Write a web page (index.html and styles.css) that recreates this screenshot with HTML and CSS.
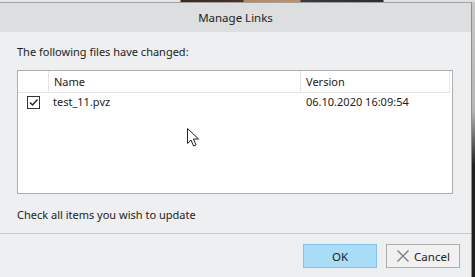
FILE: index.html
```html
<!DOCTYPE html>
<html>
<head>
<meta charset="utf-8">
<link rel="stylesheet" href="styles.css">
</head>
<body>
<div class="desktop">
  <div class="topstrip"></div>
  <div class="dialog">
    <div class="titlebar">Manage Links</div>
    <div class="content">
      <div class="label">The following files have changed:</div>
      <div class="listbox">
        <div class="header">
          <div class="col-check"></div>
          <div class="col-name">Name</div>
          <div class="col-version">Version</div>
        </div>
        <div class="row">
          <div class="col-check cell"><span class="checkbox"><svg width="11" height="11" viewBox="0 0 11 11"><path d="M2 5.5 L4.5 8 L9.5 2.5" fill="none" stroke="#222" stroke-width="1.4"/></svg></span></div>
          <div class="col-name cell">test_11.pvz</div>
          <div class="col-version cell">06.10.2020 16:09:54</div>
        </div>
        <svg class="cursor" width="16" height="22" viewBox="0 0 16 22"><path d="M1.5 1.5 L1.5 16.5 L5 13 L7.5 19 L10 18 L7.5 12 L12.5 12 Z" fill="#fff" stroke="#222" stroke-width="1"/></svg>
      </div>
      <div class="hint">Check all items you wish to update</div>
    </div>
    <div class="footer">
      <button class="btn ok">OK</button>
      <button class="btn cancel"><svg width="14" height="14" viewBox="0 0 14 14"><path d="M1.5 1.5 L12.5 12.5 M12.5 1.5 L1.5 12.5" stroke="#8a8a8a" stroke-width="1.6"/></svg><span>Cancel</span></button>
    </div>
  </div>
</div>
</body>
</html>
```
FILE: styles.css
```css
html, body {
  margin: 0;
  padding: 0;
}
body {
  width: 475px;
  height: 277px;
  overflow: hidden;
  background: #2a2a2a;
  font-family: "Noto Sans", "Open Sans", sans-serif;
  font-size: 11px;
  color: #222;
}
.desktop {
  width: 475px;
  height: 277px;
  background: linear-gradient(to bottom, #c9c9c9 0, #b5b5b5 40%, #1e1e1e 60%, #1e1e1e 100%);
}
.topstrip {
  height: 2px;
  width: 475px;
  background: linear-gradient(to right, #e6e6e6 0, #e6e6e6 180px, #3b2a1e 181px, #4a3322 243px, #b88a5e 244px, #c28f62 300px, #3a3a3a 301px, #2b2b2b 383px, #e0e0e0 384px, #e0e0e0 475px);
}
.dialog {
  width: 472px;
  height: 275px;
  box-sizing: border-box;
  border-right: 1px solid #8f8f8f;
  border-top: 1px solid #a0a0a0;
  background: #eeeff0;
  display: flex;
  flex-direction: column;
}
.titlebar {
  height: 29px;
  background: #dcdedf;
  display: flex;
  align-items: center;
  justify-content: center;
  font-size: 11.5px;
  color: #222;
}
.content {
  padding: 11px 18px 0 17px;
  height: 202px;
  box-sizing: border-box;
  border-bottom: 1px solid #c9c9c9;
}
.label {
  line-height: 17px;
  height: 17px;
}
.listbox {
  position: relative;
  margin-top: 10px;
  height: 124px;
  box-sizing: border-box;
  border: 1px solid #adadad;
  background: #fff;
}
.header {
  display: flex;
  height: 22px;
  border-bottom: 1px solid #e5e5e5;
  box-sizing: border-box;
  margin-right: 2px;
}
.header > div {
  line-height: 20px;
  padding-top: 1px;
}
.header .col-name, .header .col-version {
  border-left: 1px solid #e5e5e5;
  padding-left: 5px;
}
.header .col-version {
  border-right: 1px solid #e5e5e5;
}
.col-check {
  width: 30px;
  flex: none;
}
.col-name {
  width: 246px;
  flex: none;
}
.col-version {
  flex: 1;
}
.row {
  display: flex;
  height: 18px;
  line-height: 18px;
}
.row .col-name, .row .col-version {
  padding-left: 4px;
  border-left: 1px solid transparent;
}
.row .col-name {
  width: 248px;
  padding-left: 4px;
}
.checkbox {
  display: block;
  width: 11px;
  height: 11px;
  border: 1px solid #333;
  margin: 3px 0 0 9px;
  background: #fff;
}
.checkbox svg {
  display: block;
}
.cursor {
  position: absolute;
  left: 168px;
  top: 56px;
}
.hint {
  margin-top: 12px;
  line-height: 17px;
}
.footer {
  flex: 1;
  display: flex;
  justify-content: flex-end;
  align-items: flex-start;
  padding: 10px 11px 0 0;
  gap: 9px;
}
.btn {
  width: 74px;
  height: 24px;
  box-sizing: border-box;
  font-family: inherit;
  font-size: 11.5px;
  color: #222;
  padding: 0;
  margin: 0;
  display: flex;
  align-items: center;
  justify-content: center;
}
.ok {
  background: #a9dcf7;
  border: 1px solid #7fc4ec;
}
.cancel {
  background: #f1f1f1;
  border: 1px solid #adadad;
  gap: 4px;
}
.cancel svg {
  display: block;
}
```
